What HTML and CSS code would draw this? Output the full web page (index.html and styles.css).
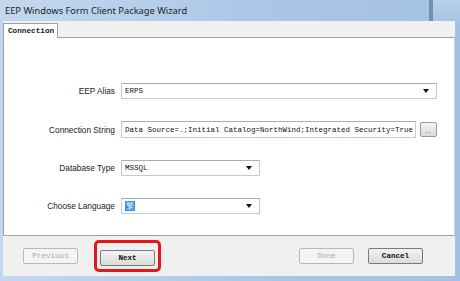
FILE: index.html
```html
<!DOCTYPE html>
<html lang="en">

<head>
  <meta charset="UTF-8">
  <title>EEP Windows Form Client Package Wizard</title>
  <link rel="stylesheet" href="styles.css">
</head>

<body>
  <div class="window">
    <div class="titlebar">
      <span class="title">EEP Windows Form Client Package Wizard</span>
      <span class="closebox"></span>
    </div>

    <div class="frame">
      <div class="tabs">
        <div class="tab">Connection</div>
      </div>

      <div class="panel">
        <div class="form-grid">
          <label class="lbl">EEP Alias</label>
          <div class="combo wide"><span class="val">ERPS</span><span class="arrow"></span></div>

          <label class="lbl">Connection String</label>
          <div class="conn-row">
            <div class="text-box"><span class="val">Data Source=.;Initial Catalog=NorthWind;Integrated Security=True</span></div>
            <button class="dots-btn" type="button"><span class="dots">..</span></button>
          </div>

          <label class="lbl">Database Type</label>
          <div class="combo short"><span class="val">MSSQL</span><span class="arrow"></span></div>

          <label class="lbl">Choose Language</label>
          <div class="combo short"><span class="sel">繁</span><span class="arrow"></span></div>
        </div>
      </div>

      <div class="footer">
        <button class="btn disabled" type="button">Previous</button>
        <div class="highlight">
          <button class="btn" type="button">Next</button>
        </div>
        <div class="spacer"></div>
        <button class="btn disabled" type="button">Done</button>
        <button class="btn cancel" type="button">Cancel</button>
      </div>
    </div>
  </div>
</body>

</html>
```

FILE: styles.css
```css
body {
  margin: 0;
  padding: 0;
  width: 460px;
  height: 281px;
  overflow: hidden;
  font-family: "Liberation Sans", Arial, sans-serif;
}

.window {
  display: flex;
  flex-direction: column;
  height: 281px;
  background: linear-gradient(to right, #c3d8ef, #a9c6e6 60%, #a3c1e4);
}

.titlebar {
  height: 21px;
  display: flex;
  align-items: center;
  padding-left: 5px;
}

.title {
  font-family: "Noto Sans", "Open Sans", sans-serif;
  font-size: 9.3px;
  color: #1e1e1e;
  flex-grow: 1;
}

.closebox {
  align-self: stretch;
  width: 27px;
  border-left: 4px solid #6f8fb3;
  background: linear-gradient(to bottom, #b9d1ec, #a8c4e6);
}

.frame {
  flex-grow: 1;
  display: flex;
  flex-direction: column;
  margin: 0 5px 5px 3px;
  background-color: #f0f0f0;
}

.tabs {
  height: 16px;
  display: flex;
  align-items: flex-end;
}

.tab {
  height: 15px;
  width: 55px;
  box-sizing: border-box;
  background-color: #fff;
  border: 1px solid #a0a0a0;
  border-bottom: none;
  margin-bottom: -1px;
  position: relative;
  font-family: "Liberation Mono", "Courier New", monospace;
  font-size: 7.7px;
  font-weight: bold;
  color: #222;
  padding: 3px 0 0 4px;
}

.panel {
  height: 199px;
  box-sizing: border-box;
  background-color: #fff;
  border: 1px solid #a0a0a0;
  border-right-color: #d0d0d0;
  padding-top: 45px;
}

.form-grid {
  display: grid;
  grid-template-columns: 111px auto;
  column-gap: 6px;
  row-gap: 22px;
  align-items: center;
}

.lbl {
  text-align: right;
  font-size: 8.3px;
  color: #222;
}

.combo,
.text-box {
  height: 16px;
  box-sizing: border-box;
  border: 1px solid #c5c9d0;
  border-top-color: #a9adb5;
  background-color: #fff;
  display: flex;
  align-items: center;
  padding-left: 3px;
}

.combo.wide {
  width: 316px;
}

.combo.short {
  width: 139px;
}

.val {
  font-family: "Liberation Mono", "Courier New", monospace;
  font-size: 7.5px;
  color: #111;
  flex-grow: 1;
  white-space: nowrap;
  overflow: hidden;
}

.arrow {
  width: 0;
  height: 0;
  border-left: 3px solid transparent;
  border-right: 3px solid transparent;
  border-top: 4px solid #111;
  margin-right: 7px;
  margin-left: auto;
}

.sel {
  background-color: #3b8ee8;
  color: #dceeff;
  font-family: "Noto Sans CJK TC", sans-serif;
  font-size: 8px;
  line-height: 10px;
  padding: 0 1px;
}

.conn-row {
  display: flex;
  align-items: center;
  gap: 4px;
}

.text-box {
  width: 295px;
  height: 17px;
}

.dots-btn {
  width: 17px;
  height: 15px;
  padding: 0 0 2px 0;
  border: 1px solid #9a9a9a;
  border-radius: 2px;
  background: linear-gradient(to bottom, #f4f4f4, #dadada);
  display: flex;
  align-items: flex-end;
  justify-content: center;
}

.dots {
  font-size: 7px;
  font-weight: bold;
  color: #888;
  line-height: 6px;
  letter-spacing: 1px;
}

.footer {
  flex-grow: 1;
  display: flex;
  align-items: center;
  padding: 0 32px 0 20px;
}

.btn {
  width: 55px;
  height: 16px;
  padding: 0;
  border: 1px solid #7a7a7a;
  border-radius: 2px;
  background: linear-gradient(to bottom, #f3f3f3, #dbdbdb);
  font-family: "Liberation Mono", "Courier New", monospace;
  font-size: 7.6px;
  font-weight: bold;
  color: #111;
}

.btn.disabled {
  border-color: #b5babd;
  background: #f4f4f4;
  color: #a8a8a8;
  font-weight: normal;
}

.highlight {
  margin-left: 16px;
  border: 3px solid #e4161a;
  border-radius: 5px;
  padding: 3px 3px;
}

.spacer {
  flex-grow: 1;
}

.cancel {
  margin-left: 14px;
}
```
